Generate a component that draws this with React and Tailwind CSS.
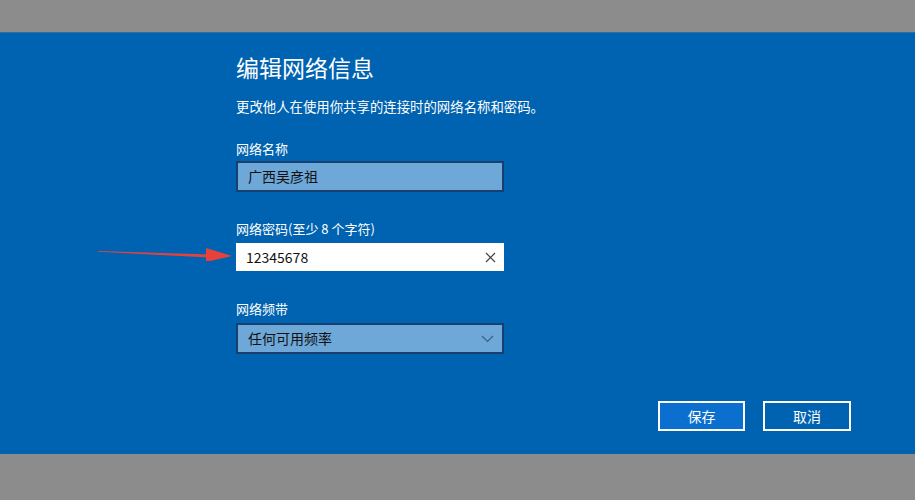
import React from 'react';

const cjk = { fontFamily: '"Microsoft YaHei", "Noto Sans CJK SC", "Noto Sans", sans-serif' };

export default function App() {
  return (
    <div className="w-[915px] h-[500px] bg-[#8c8c8c] flex flex-col" style={cjk}>
      <div className="h-[32px] shrink-0" />
      <div className="h-[422px] bg-[#0063b1] border-t border-[#2f6da3] relative">
        <div className="ml-[236px] pt-[18px] flex flex-col w-[268px]">
          <h1 className="text-[23px] leading-[32px] text-white">编辑网络信息</h1>
          <p className="mt-[14px] text-[13.4px] leading-[18px] text-white whitespace-nowrap">
            更改他人在使用你共享的连接时的网络名称和密码。
          </p>

          <label className="mt-[25px] text-[13px] leading-[18px] text-white">网络名称</label>
          <div className="mt-[3px] h-[31px] border-2 border-[#17406e] bg-[#6ea8d9] flex items-center px-[10px] text-[14px] text-[#111]">
            广西吴彦祖
          </div>

          <label className="mt-[28px] text-[13px] leading-[18px] text-white">网络密码(至少 8 个字符)</label>
          <div className="mt-[5px] h-[28px] bg-white flex items-center justify-between pl-[10px] pr-[8px] text-[14px] text-[#111]">
            <span>12345678</span>
            <svg width="11" height="11" viewBox="0 0 11 11" className="text-[#444]">
              <path d="M1 1 L10 10 M10 1 L1 10" stroke="currentColor" strokeWidth="1.2" />
            </svg>
          </div>

          <label className="mt-[29px] text-[13px] leading-[18px] text-white">网络频带</label>
          <div className="mt-[5px] h-[31px] border-2 border-[#17406e] bg-[#6ea8d9] flex items-center justify-between pl-[10px] pr-[8px] text-[14px] text-[#111]">
            <span>任何可用频率</span>
            <svg width="13" height="8" viewBox="0 0 13 8" className="text-[#3a5f87]">
              <path d="M1 1 L6.5 6.5 L12 1" stroke="currentColor" strokeWidth="1.2" fill="none" />
            </svg>
          </div>
        </div>

        <div className="absolute left-[658px] top-[368px] flex gap-[18px]">
          <button className="w-[87px] h-[30px] border-2 border-white bg-[#0a6fce] text-white text-[14px]">保存</button>
          <button className="w-[88px] h-[30px] border-2 border-white bg-[#0063b1] text-white text-[14px]">取消</button>
        </div>

        <svg className="absolute left-[98px] top-[212px]" width="134" height="16" viewBox="0 0 134 16">
          <path d="M0 6 L112 9.5 L112 12.5 L0 6.8 Z" fill="#e8413c" />
          <path d="M108 3 L134 11 L108 17 Z" fill="#e8413c" />
        </svg>
      </div>
    </div>
  );
}
